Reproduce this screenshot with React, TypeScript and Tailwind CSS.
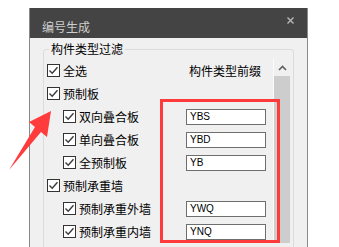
const rows = [
  { label: "全选", level: 0, header: true },
  { label: "预制板", level: 0 },
  { label: "双向叠合板", level: 1, code: "YBS" },
  { label: "单向叠合板", level: 1, code: "YBD" },
  { label: "全预制板", level: 1, code: "YB" },
  { label: "预制承重墙", level: 0 },
  { label: "预制承重外墙", level: 1, code: "YWQ" },
  { label: "预制承重内墙", level: 1, code: "YNQ" },
];

function CheckBox() {
  return (
    <span className="w-[13px] h-[13px] shrink-0 border border-[#333] bg-white flex items-center justify-center">
      <svg width="11" height="11" viewBox="0 0 11 11">
        <path d="M1.5 5.5 L4.2 8.2 L9.5 2.2" fill="none" stroke="#3c3c3c" strokeWidth="1.4" />
      </svg>
    </span>
  );
}

export default function App() {
  return (
    <div className="w-[339px] h-[247px] bg-white relative overflow-hidden font-['Noto_Sans_CJK_SC',sans-serif] text-[12px] text-black">
      {/* Dialog */}

      <div className="ml-[29px] mt-[8px] w-[279px] h-[239px] border-x border-[#8a8a8a] bg-[#f0f0f0] flex flex-col overflow-hidden">
        <div className="h-[30px] shrink-0 bg-[#444444] flex items-start justify-between pl-[12px] pr-[13px]">
          <span className="mt-[12px] leading-[14px] text-[#cfcfcf]">编号生成</span>
          <svg className="mt-[9px]" width="7" height="7" viewBox="0 0 7 7">
            <path d="M0.5 0.5 L6.5 6.5 M6.5 0.5 L0.5 6.5" stroke="#b8b8b8" strokeWidth="1.4" />
          </svg>
        </div>

        <div className="px-[13px] pt-[4px] flex-1">
          <fieldset className="border border-[#dcdcdc] rounded-[3px] px-[3px] h-[260px]">
            <legend className="ml-[2px] px-[2px] leading-[14px]">构件类型过滤</legend>

            <div className="mt-[3px] flex">
              <div className="flex-1">
                {rows.map((r) => (
                  <div key={r.label} className="h-[23px] flex items-center">
                    <div className={`w-[139px] flex items-center gap-[3px] ${r.level ? "pl-[16px]" : ""}`}>
                      <CheckBox />
                      <span className="leading-[14px]">{r.label}</span>
                    </div>
                    {r.header && <span className="pl-[3px] leading-[14px]">构件类型前缀</span>}
                    {r.code && (
                      <div className="w-[80px] h-[16px] border border-[#6e6e6e] bg-white flex items-center pl-[3px] font-['Liberation_Sans',sans-serif] text-[10px]">
                        {r.code}
                      </div>
                    )}
                  </div>
                ))}
              </div>

              {/* Scrollbar */}
              <div className="w-[17px] border-l border-[#fbfbfb] flex flex-col">
                <div className="h-[17px] flex items-center justify-center">
                  <svg width="9" height="6" viewBox="0 0 9 6">
                    <path d="M1 5 L4.5 1.5 L8 5" fill="none" stroke="#606060" strokeWidth="1.6" />
                  </svg>
                </div>
                <div className="flex-1 bg-[#cdcdcd]" />
              </div>
            </div>
          </fieldset>
        </div>
      </div>

      {/* Annotation */}

      <div className="absolute left-[160px] top-[99px] w-[120px] h-[144px] border-[3px] border-[#ff3a3a]" />

      <svg className="absolute left-0 top-0 pointer-events-none" width="339" height="247" viewBox="0 0 339 247">
        <polygon points="51,111 29,122 35,127 9,170 41,132 47,137" fill="#ff3b3b" />
      </svg>
    </div>
  );
}
